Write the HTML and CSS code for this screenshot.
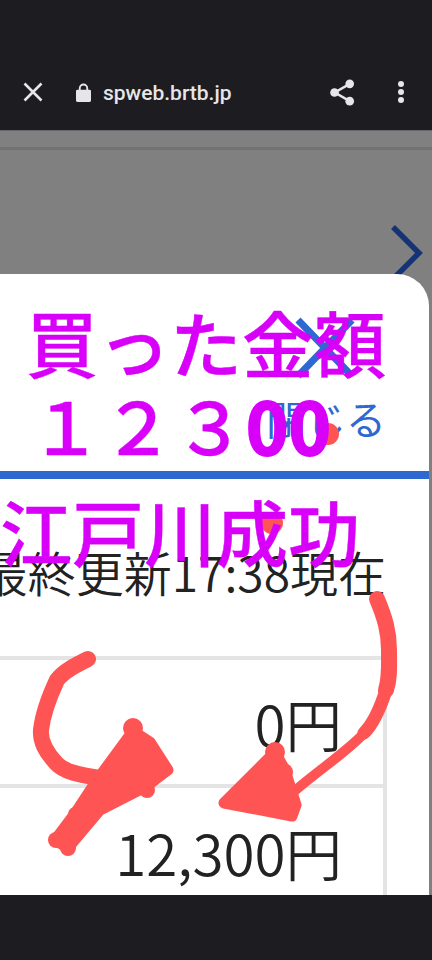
FILE: index.html
```html
<!DOCTYPE html>
<html lang="ja">
<head>
<meta charset="utf-8">
<title>spweb.brtb.jp</title>
<link rel="stylesheet" href="styles.css">
</head>
<body>
<div class="screen">
  <header class="toolbar">
    <svg class="tb-close" viewBox="0 0 20 20" width="20" height="20"><path d="M1.5 1.5 18.500 18.500M18.500 1.500 1.500 18.500"/></svg>
    <svg class="tb-lock" viewBox="0 0 16 20" width="15" height="19"><path d="M1.500 7H3V5.500a5 5 0 0 1 10 0V7h1.500A1.500 1.500 0 0 1 16 8.500v10a1.500 1.500 0 0 1-1.500 1.500h-13A1.500 1.500 0 0 1 0 18.500v-10A1.500 1.500 0 0 1 1.500 7zM5 7h6V5.500a3 3 0 0 0-6 0z" fill-rule="evenodd"/></svg>
    <span class="tb-url">spweb.brtb.jp</span>
    <svg class="tb-share" viewBox="0 0 26 28" width="25" height="27"><path class="share-line" d="M20.500 5 5 14 20.500 23"/><circle cx="20.500" cy="5" r="4.500"/><circle cx="4.700" cy="14" r="4.500"/><circle cx="20.500" cy="23" r="4.500"/></svg>
    <span class="tb-more"><i></i><i></i><i></i></span>
  </header>
  <main class="page">
    <div class="page-rule"></div>
    <svg class="page-next" viewBox="0 0 34 60" width="34" height="60"><path d="M4 4 30 30 4 56"/></svg>
    <section class="modal">
      <div class="modal-head">
        <button class="close">
          <svg viewBox="0 0 60 62" width="60" height="62"><path d="M3 3 57 59M57 3 3 59"/></svg>
          <span>閉じる</span>
        </button>
      </div>
      <div class="modal-body">
        <div class="updated"><span>最終更新17:38現在</span></div>
        <table class="amounts">
          <tr><td>0円</td></tr>
          <tr><td>12,300円</td></tr>
        </table>
      </div>
    </section>
  </main>
  <footer class="navbar"></footer>

  <svg class="ink" viewBox="0 0 432 960" width="432" height="960">
    <circle cx="328" cy="434" r="11"/>
    <circle cx="272" cy="523" r="11"/>
    <path class="s16" d="M377 599C385 618 389 632 389 650C389 665 390 678 386 690"/>
    <path class="s13" d="M386 690C381 706 375 722 364 733"/>
    <path class="s11" d="M366 731C350 750 318 770 290 795"/>
    <path class="fill" d="M275 752 285 770 296 805 292 816 224 803Z"/>
    <circle cx="275" cy="752" r="10"/>
    <circle cx="284" cy="772" r="9"/>
    <path class="s16" d="M88 659C76 665 64 671 57 680C50 695 43 712 41 730C40 742 46 752 56 763C64 772 80 775 100 778"/>
    <path class="fill" d="M133 731 150 742 168 770 147 786 100 810 68 848 55 840 76 812 97 780Z"/>
    <circle cx="133" cy="728" r="10"/>
    <circle cx="147" cy="790" r="8"/>
    <circle cx="75" cy="814" r="7"/>
    <circle cx="56" cy="840" r="8"/>
    <circle cx="68" cy="848" r="8"/>
  </svg>
  <p class="mark mark-a">買った金額</p>
  <p class="mark mark-b">１２３<b>00</b></p>
  <p class="mark mark-c">江戸川成功</p>
</div>
</body>
</html>
```
FILE: styles.css
```css
* { box-sizing: border-box; }
html, body { margin: 0; padding: 0; }
body { font-family: "Noto Sans CJK JP", "Noto Sans", sans-serif; background: #1c1c21; }

.screen {
  position: relative;
  width: 432px;
  height: 960px;
  overflow: hidden;
  display: flex;
  flex-direction: column;
}

.toolbar {
  height: 131px;
  flex: none;
  background: #1c1c21;
  border-bottom: 1px solid #68686a;
  display: flex;
  align-items: center;
  padding: 62px 0 8px 23px;
  color: #e6e6e9;
}
.tb-close { stroke: #e6e6e9; stroke-width: 2.600; fill: none; }
.tb-lock { fill: #e6e6e9; margin-left: 33px; }
.tb-url {
  font-family: Roboto, sans-serif;
  font-weight: 500;
  font-size: 21px;
  margin-left: 12px;
  position: relative;
  top: 1px;
}
.tb-share { fill: #e6e6e9; margin-left: auto; }
.share-line { fill: none; stroke: #e6e6e9; stroke-width: 2.600; }
.tb-more {
  display: flex;
  flex-direction: column;
  gap: 2px;
  margin: 0 28px 0 43px;
}
.tb-more i { width: 6px; height: 6px; border-radius: 50%; background: #e6e6e9; display: block; }

.page {
  position: relative;
  flex: 1;
  background: #808080;
  overflow: hidden;
  padding-top: 16px;
}
.page-rule { height: 3px; background: #727272; }
.page-next {
  position: absolute;
  top: 92px;
  right: 9px;
  fill: none;
  stroke: #163375;
  stroke-width: 5.500px;
}

.modal {
  position: absolute;
  top: 143px;
  left: 0;
  width: 429px;
  bottom: -20px;
  background: #fff;
  border-top-right-radius: 32px;
  overflow: hidden;
}
.modal-head {
  height: 197px;
  padding: 43px 43px 0 0;
  display: flex;
  justify-content: flex-end;
}
.close {
  border: 0;
  padding: 0;
  background: none;
  color: #2f68d0;
  font: inherit;
  font-size: 40px;
  line-height: 1;
  display: flex;
  flex-direction: column;
  align-items: center;
  height: 130px;
  gap: 19px;
}
.close svg { fill: none; stroke: #2f68d0; stroke-width: 7px; margin-right: 2px; }
.close span { white-space: nowrap; }

.modal-body {
  border-top: 8px solid #2f68d0;
  padding-right: 42px;
}
.updated {
  height: 177px;
  padding: 62px 1px 0 0;
  font-size: 48px;
  line-height: 60px;
  display: flex;
  justify-content: flex-end;
  white-space: nowrap;
  color: #222;
  font-weight: 350;
}
.updated span { flex: none; }
.amounts {
  width: 100%;
  border-collapse: collapse;
  font-size: 56.500px;
  font-weight: 350;
  color: #222;
}
.amounts td {
  height: 128px;
  border-top: 4px solid #e4e4e4;
  border-right: 4px solid #e4e4e4;
  padding: 0 41px 0 0;
  text-align: right;
  line-height: 1;
}

.navbar { height: 65px; flex: none; background: #1c1c21; position: relative; }

.ink { position: absolute; left: 0; top: 0; fill: #ff5454; pointer-events: none; }
.ink path { fill: none; stroke: #ff5454; stroke-linecap: round; stroke-linejoin: round; }
.ink .s16 { stroke-width: 16px; }
.ink .s13 { stroke-width: 13px; }
.ink .s11 { stroke-width: 10px; }
.ink .fill { fill: #ff5454; stroke-width: 11px; }

.mark {
  position: absolute;
  margin: 0;
  color: #d900fa;
  font-size: 72px;
  line-height: 72px;
  font-weight: 500;
  -webkit-text-stroke: 0.4px #d900fa;
  white-space: nowrap;
}
.mark b { font-weight: 700; -webkit-text-stroke: 2px #d900fa; }
.mark-a { left: 26px; top: 305px; }
.mark-b { left: 30px; top: 388px; }
.mark-c { left: 0; top: 494px; }
```
